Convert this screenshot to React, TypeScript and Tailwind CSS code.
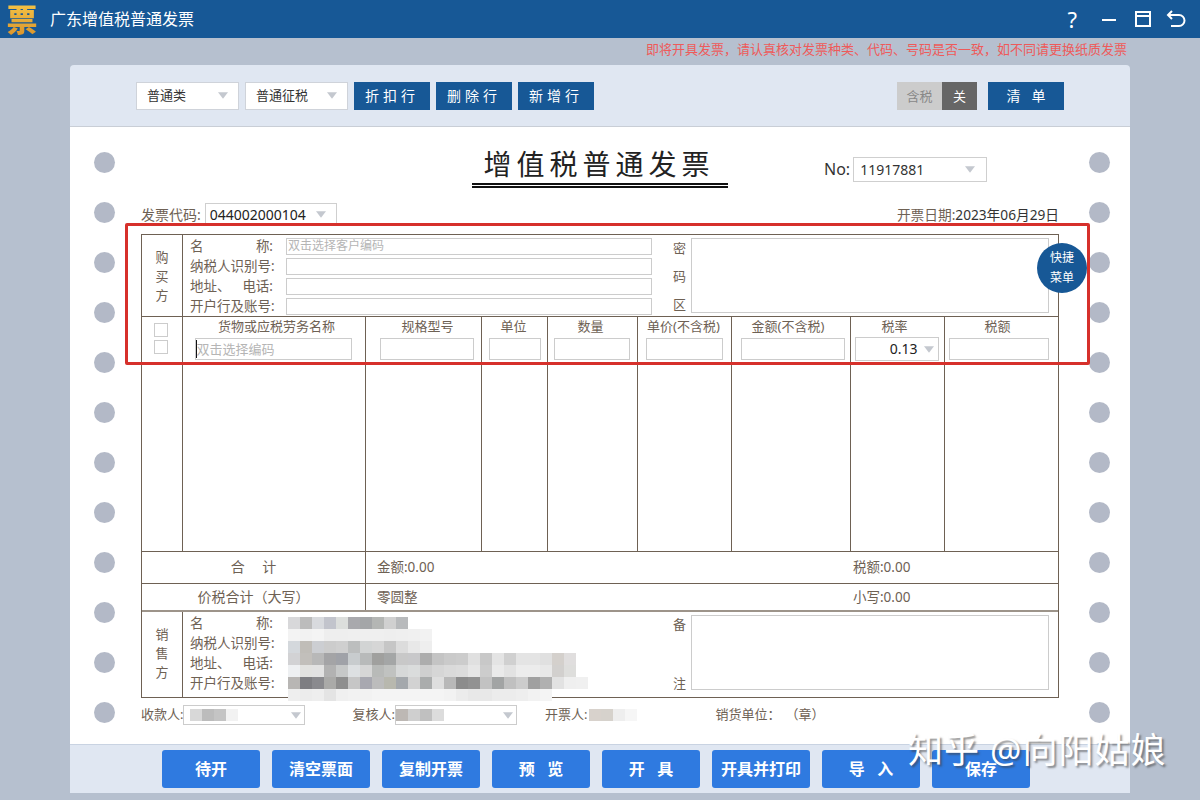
const font = "font-['Noto_Sans','Noto_Sans_CJK_SC',sans-serif]";

const Arrow = ({ className = "" }: { className?: string }) => (
  <svg viewBox="0 0 12 8" className={`w-2.5 h-[7px] ${className}`}>
    <path d="M0 0h12L6 8z" fill="#c4c8cf" />
  </svg>
);

const Holes = () => (
  <div className="flex flex-col gap-[29px] pt-[25px] w-[21px] shrink-0">
    {Array.from({ length: 12 }).map((_, i) => (
      <div key={i} className="w-[21px] h-[21px] rounded-full bg-[#b3b9c7]" />
    ))}
  </div>
);

const ToolBtn = ({ label }: { label: string }) => (
  <button className="w-[76px] h-7 ml-1.5 bg-[#175896] text-white text-sm tracking-[4px]">{label}</button>
);

const Field = ({ text }: { text?: string }) => (
  <div className="w-[366px] h-[17px] border border-[#ccc] text-xs leading-[14px] text-[#b5b5b5] pl-px">{text}</div>
);

const Label = ({ a, b }: { a: string; b?: string }) => (
  <div className="w-[83px] h-5 flex justify-between text-[13.5px] leading-5 whitespace-nowrap">
    <span>{a}</span>
    {b && <span>{b}</span>}
  </div>
);

const Labels = () => (
  <div className="flex flex-col">
    <Label a="名" b="称:" />
    <Label a="纳税人识别号:" />
    <Label a="地址、" b="电话:" />
    <Label a="开户行及账号:" />
  </div>
);

const columns = [
  { title: "货物或应税劳务名称", box: "w-[157px] mr-0.5", head: "ml-[5px]" },
  { title: "规格型号", box: "w-[94px] ml-1.5", head: "ml-2" },
  { title: "单位", box: "w-[52px]", head: "mr-0.5" },
  { title: "数量", box: "w-[76px] mr-0.5", head: "mr-1" },
  { title: "单价(不含税)", box: "w-[77px]", head: "mr-0.5" },
  { title: "金额(不含税)", box: "w-[104px] ml-1", head: "mr-1.5" },
  { title: "税率", box: "w-[84px] mr-0.5", head: "mr-1.5" },
  { title: "税额", box: "w-[100px] mr-1.5", head: "mr-2" },
];

const mosaic = [
  ["#d8d8da", "#bcbcbc", "#d8dade", "#c2c4cc", "#dcdedc", "#a9a9ad", "#a4a6a8", "#b4b6b4", "#d0d0d0", "#b8babc"],
  ["#f3f3f3", "#f2f2f2", "#f4f4f4", "#eeeeee", "#eeeeee", "#efefef", "#efefef", "#efefef", "#eeeeee", "#efefef", "#f0f0f0", "#f2f2f2"],
  ["#d4d8dc", "#c0bdb8", "#ccced2", "#cccccc", "#cfcfcf", "#bcbebe", "#d2d4d4", "#d6d6d6", "#c6c6c6", "#dcdcdc", "#e8e8e8", "#eeeeee"],
  ["#d2d2d4", "#c2bfbb", "#b8b8b8", "#a4a4a6", "#a0a2a8", "#c8ccce", "#b8baba", "#a0a09e", "#a4a6a6", "#c8c8c8", "#c8c8ca", "#adadad", "#c4c4c4", "#cacaca", "#cccccc", "#e0e0e0", "#c8c8c8", "#e4e4e4", "#d0d0d0", "#e4e4e4", "#e4e4e4", "#e0e0e0", "#d4d0cc", "#e0dede"],
  ["#eef0f2", "#e2e2e0", "#e2e2e2", "#b2b2b2", "#c6c8c8", "#dde0e2", "#d6d6d6", "#b8bab8", "#c0c2c0", "#d6d8d8", "#dadcdc", "#cfcfcf", "#d6d6d6", "#dadada", "#dcdcdc", "#e6e6e6", "#cccccc", "#eaeaea", "#e2e2e2", "#ececec", "#ececec", "#e8e8e8", "#d2d0ce", "#dededc"],
  ["#b8b6b4", "#7e7e82", "#8a8a8e", "#aaaaa8", "#8e8e8e", "#c6c6c6", "#a8a8b0", "#bcbcbc", "#b8b8ae", "#a4a8ac", "#d2d2d2", "#aaacac", "#dedede", "#b8b8b8", "#8c8c8c", "#929292", "#c2c2c2", "#a2a4a4", "#c0c0c0", "#cccccc", "#a0a0a0", "#b0b0b0", "#e2e2e2", "#efefef", "#f0f0f0"],
  ["#eeeeee", "#ececec", "#eeeeee", "#e4e4e4", "#f0f0f0", "#f2f2f2", "#f2f2f2", "#f4f4f4", "#f4f4f4", "#f4f4f4", "#f4f4f4", "#f4f4f4", "#f4f4f4", "#f2f2f2", "#ececec", "#e8e8e8", "#e8e8e8", "#ececec", "#ececec", "#eeeeee", "#f2f2f2", "#f4f4f4"],
];

const Blur = ({ colors }: { colors: string[] }) => (
  <div className="flex h-3 blur-[0.5px]">
    {colors.map((c, i) => (
      <div key={i} className="w-3 h-3" style={{ background: c }} />
    ))}
  </div>
);

const bottomBtns = ["待开", "清空票面", "复制开票", "预   览", "开   具", "开具并打印", "导   入", "保存"];

export default function App() {
  return (
    <div className={`relative w-[1200px] h-[800px] overflow-hidden bg-[#b6c0cf] flex flex-col ${font}`}>
      {/* title bar */}
      <div className="h-[38px] bg-[#175896] flex items-center text-white shrink-0">
        <span className="w-[34px] ml-[5px] text-[31px] leading-[38px] h-[38px] font-black text-center bg-gradient-to-b from-[#f6c94a] to-[#d9922a] bg-clip-text text-transparent">票</span>
        <span className="ml-[11px] text-base">广东增值税普通发票</span>
        <div className="ml-auto flex items-center">
          <span className="text-[22px] leading-none font-normal">?</span>
          <svg viewBox="0 0 18 18" className="w-[18px] h-[18px] ml-[23px]">
            <path d="M2 10h14" stroke="#fff" strokeWidth="2" />
          </svg>
          <svg viewBox="0 0 18 18" className="w-[18px] h-[18px] ml-[16px]">
            <path d="M2 2h14v14H2zM2 6h14" stroke="#fff" strokeWidth="2" fill="none" />
          </svg>
          <svg viewBox="0 0 20 20" className="w-5 h-5 ml-[14px] mr-[14px]">
            <path d="M6 2 2 6l4 4M2 6h11a5 5 0 0 1 0 11H5" stroke="#fff" strokeWidth="2" fill="none" />
          </svg>
        </div>
      </div>

      <div className="h-[27px] pr-[73px] text-right text-[13px] leading-[23px] text-[#ee5a5a] shrink-0">
        即将开具发票，请认真核对发票种类、代码、号码是否一致，如不同请更换纸质发票
      </div>

      {/* main card */}
      <div className="ml-[70px] w-[1060px] h-[728px] flex flex-col rounded-t-[4px] overflow-hidden bg-[#e0e7f2] shrink-0">
        <div className="h-[62px] flex items-center pl-[66px] border-b border-[#c9ced6] shrink-0">
          <div className="w-[103px] h-7 bg-white border border-[#cfd3da] flex items-center justify-between pl-2.5 pr-[10px] text-[13px] text-[#333]">
            普通类 <Arrow />
          </div>
          <div className="w-[103px] h-7 ml-1.5 bg-white border border-[#cfd3da] flex items-center justify-between pl-2.5 pr-[10px] text-[13px] text-[#333]">
            普通征税 <Arrow />
          </div>
          <ToolBtn label="折扣行" />
          <ToolBtn label="删除行" />
          <ToolBtn label="新增行" />
          <div className="w-[45px] h-7 ml-[303px] bg-[#cccccc] text-[#888] text-[13px] leading-7 text-center">含税</div>
          <div className="w-[35px] h-7 bg-[#666666] text-white text-[13px] leading-7 text-center">关</div>
          <button className="w-[76px] h-7 ml-[11px] bg-[#175896] text-white text-sm whitespace-pre">清   单</button>
        </div>

        {/* paper */}
        <div className="h-[617px] bg-white flex pl-6 text-[#6e6154] shrink-0">
          <Holes />
          <div className="w-[918px] ml-[26px] shrink-0">
            <div className="flex mt-[21px] h-[39px]">
              <div className="ml-[331px] w-[256px] h-[40px] border-b-[5px] border-double border-[#111] text-center text-[28px] leading-[32px] tracking-[5px] text-[#222] pr-0.5">
                增值税普通发票
              </div>
              <span className="ml-[96px] mt-[9px] text-base leading-6 text-[#333]">No:</span>
              <div className="ml-[3px] mt-[9px] w-[134px] h-[25px] border border-[#cfcfcf] flex items-center justify-between pl-1.5 pr-[11px] text-sm text-[#333]">
                11917881 <Arrow />
              </div>
            </div>

            <div className="flex items-center justify-between mt-[16px] h-[23px] text-sm">
              <div className="flex items-center">
                发票代码:
                <div className="ml-1 w-[132px] h-[23px] border border-[#cfcfcf] flex items-center justify-between px-1 pr-2.5 text-[#222]">
                  044002000104 <Arrow />
                </div>
              </div>
              <div className="text-[13.7px]">开票日期:<span className="text-[#333]">2023年06月29日</span></div>
            </div>

            {/* invoice table */}
            <div className="mt-2 border border-[#6e6154] text-[13px]">
              <div className="flex h-[82px] border-b border-[#6e6154]">
                <div className="w-10 flex flex-col items-center justify-center gap-[3px] leading-4">
                  <span>购</span><span>买</span><span>方</span>
                </div>
                <div className="flex-1 border-l border-[#6e6154] flex pl-[7px] pt-[1px]">
                  <Labels />
                  <div className="ml-[13px] flex flex-col gap-[3px] pt-[2px]">
                    <Field text="双击选择客户编码" />
                    <Field />
                    <Field />
                    <Field />
                  </div>
                  <div className="ml-[21px] flex flex-col justify-between w-[13px] py-[4px] leading-4">
                    <span>密</span><span>码</span><span>区</span>
                  </div>
                  <div className="ml-[5px] mt-[2px] w-[358px] h-[75px] border border-[#ccc]" />
                </div>
              </div>

              <div className="flex h-[235px] border-b border-[#6e6154]">
                <div className="w-10 flex flex-col items-center gap-[3px] pt-[6px] pr-[2px]">
                  <div className="w-[14px] h-[14px] border border-[#ccc]" />
                  <div className="w-[14px] h-[14px] border border-[#ccc]" />
                </div>
                {columns.map((col, i) => (
                  <div
                    key={col.title}
                    className={`border-l border-[#6e6154] flex flex-col items-center ${["w-[183px]", "w-[116px]", "w-[66px]", "w-[90px]", "w-[94px]", "w-[119px]", "w-[94px]", "w-[114px]"][i]}`}
                  >
                    <div className={`h-[20px] leading-[18px] ${col.head}`}>{col.title}</div>
                    {i === 6 ? (
                      <div className={`h-[24px] border border-[#ccc] flex items-center justify-end gap-[6px] pr-1 text-sm text-[#222] ${col.box}`}>
                        0.13 <Arrow />
                      </div>
                    ) : (
                      <div className={`h-[22px] mt-[1px] border border-[#ccc] ${col.box}`}>
                        {i === 0 && (
                          <span className="block border-l border-[#111] h-[18px] mt-px text-[#b5b5b5] leading-[18px]">双击选择编码</span>
                        )}
                      </div>
                    )}
                  </div>
                ))}
              </div>

              <div className="flex h-[32px] border-b border-[#6e6154] leading-[30px] text-[13.5px]">
                <div className="w-[223px] text-center text-sm leading-[30px] [word-spacing:14px]">合 计</div>
                <div className="flex-1 border-l border-[#6e6154] pl-[11px]">金额:0.00</div>
                <div className="w-[205px]">税额:0.00</div>
              </div>
              <div className="flex h-[28px] border-b-2 border-[#9d948a] leading-[26px] text-[13.5px]">
                <div className="w-[223px] text-center text-sm leading-[26px]">价税合计（大写）</div>
                <div className="flex-1 border-l border-[#6e6154] pl-[11px]">零圆整</div>
                <div className="w-[205px]">小写:0.00</div>
              </div>

              <div className="flex h-[85px]">
                <div className="w-10 flex flex-col items-center justify-center gap-[3px] leading-4 pb-1">
                  <span>销</span><span>售</span><span>方</span>
                </div>
                <div className="relative flex-1 border-l border-[#6e6154] flex pl-[7px] pt-[1px]">
                  <Labels />
                  <div className="absolute left-[105px] top-[5px] flex flex-col">
                    {mosaic.map((row, i) => (
                      <Blur key={i} colors={row} />
                    ))}
                  </div>
                  <div className="ml-[400px] flex flex-col justify-between w-[13px] pt-[3px] pb-[6px] leading-4">
                    <span>备</span><span>注</span>
                  </div>
                  <div className="ml-[5px] mt-[2px] w-[358px] h-[75px] border border-[#ccc]" />
                </div>
              </div>
            </div>

            <div className="flex items-center mt-[7px] h-[20px] text-[13px]">
              <span>收款人:</span>
              <div className="relative w-[122px] h-5 border border-[#ccc] flex items-center justify-end pr-[3px]">
                <Arrow />
                <div className="absolute left-[6px] top-[3px]">
                  <Blur colors={["#d8d8d8", "#bcbcbc", "#c4c4c4", "#f2f2f2"]} />
                </div>
              </div>
              <span className="ml-[47px]">复核人:</span>
              <div className="relative w-[122px] h-5 border border-[#ccc] flex items-center justify-end pr-[3px]">
                <Arrow />
                <div className="absolute left-0 top-[3px]">
                  <Blur colors={["#bdb8b4", "#cfcfcf", "#c0c0c0", "#dcdcdc"]} />
                </div>
              </div>
              <span className="ml-[28px]">开票人:</span>
              <div className="ml-0.5">
                <Blur colors={["#d8d2cc", "#d6d2cc", "#eeeeee", "#f6f6f6"]} />
              </div>
              <span className="ml-[78px]">销货单位：</span>
              <span className="ml-[5px]">（章）</span>
            </div>
          </div>
          <div className="ml-[30px]">
            <Holes />
          </div>
        </div>

        {/* footer buttons */}
        <div className="h-[49px] border-t border-[#c9d3e2] flex items-center gap-3 pl-[92px] shrink-0">
          {bottomBtns.map((b) => (
            <button key={b} className="w-[98px] h-[38px] rounded-[3px] bg-[#2f7ae0] text-white text-base font-bold whitespace-pre">
              {b}
            </button>
          ))}
        </div>
      </div>

      {/* annotation + floating bits */}
      <div className="absolute left-[125px] top-[223px] w-[965px] h-[142px] border-[3px] border-[#d6302b] rounded-[2px]" />
      <div className="absolute left-[1037px] top-[243px] w-[50px] h-[50px] rounded-full bg-[#175896] text-white text-xs leading-[20px] flex flex-col items-center justify-center">
        <span>快捷</span>
        <span>菜单</span>
      </div>
      <div className="absolute left-[908px] top-[726px] text-[35px] leading-[48px] tracking-[1px] text-white whitespace-nowrap [text-shadow:2px_2px_2px_rgba(60,60,60,0.55)]">
        知乎 @向阳姑娘
      </div>
    </div>
  );
}
